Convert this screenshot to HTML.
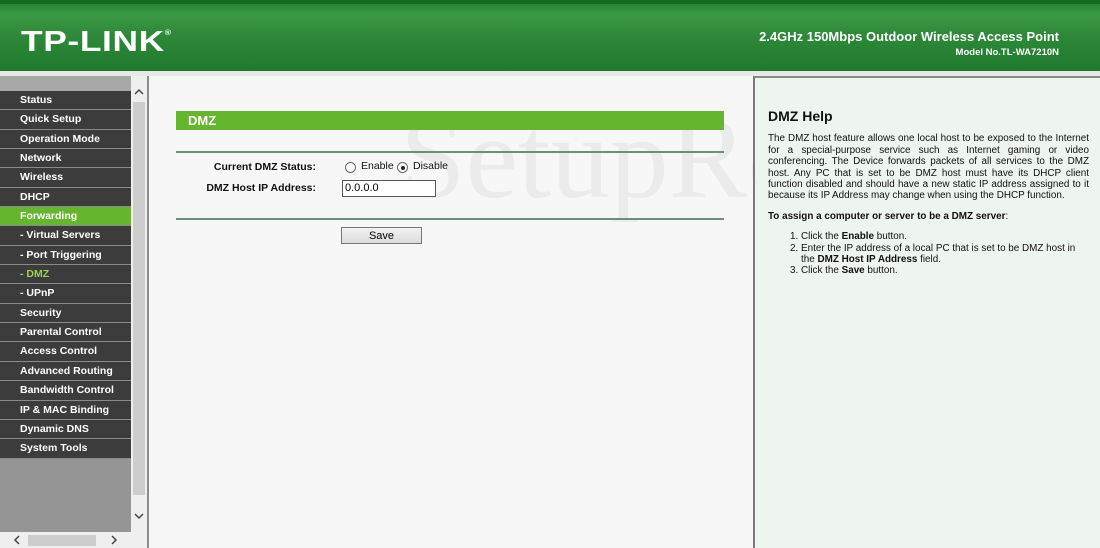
<!DOCTYPE html>
<html><head><style>
*{margin:0;padding:0;box-sizing:border-box}
body{width:1100px;height:548px;overflow:hidden;background:#f7f7f7;font-family:"Liberation Sans",Arial,sans-serif;position:relative}
.hdr{position:absolute;left:0;top:0;width:1100px;height:71px;background:linear-gradient(180deg,#1d7a2c 0%,#3c9a44 20%,#2f8a3a 45%,#1f7a2e 100%)}
.hdr .top{position:absolute;left:0;top:0;width:1100px;height:4px;background:#156a22}
.logo{position:absolute;left:21px;top:26px;color:#fff;font-weight:bold;font-size:29px;letter-spacing:0.5px;transform:scaleX(1.22);transform-origin:left;white-space:nowrap}
.logo sup{font-size:7px;vertical-align:top;position:relative;top:4px}
.t1{position:absolute;right:41px;top:29px;color:#fff;font-weight:bold;font-size:13px}
.t2{position:absolute;right:41px;top:47px;color:#fff;font-weight:bold;font-size:9.5px}
.sep{position:absolute;left:0;top:71px;width:1100px;height:5px;background:#e6e9e6}
.side{position:absolute;left:0;top:76px;width:131px;height:472px;background:#959595}
.side .band{height:15px;background:#a8a8a8}
.mi{height:19.35px;background:#3c3c3c;border-bottom:1.5px solid #8a8a8a;color:#fff;font-weight:bold;font-size:10.5px;line-height:19px;padding-left:20px}
.mi.act{background:#66b52e}
.mi.sel{color:#9fd24a}
.sb{position:absolute;left:131px;top:76px;width:16px;height:456px;background:#efefef}
.sb .th{position:absolute;left:2px;top:26px;width:12px;height:393px;background:#cdcdcd}
.hb{position:absolute;left:0;top:532px;width:147px;height:16px;background:#efefef}
.hb .th{position:absolute;left:28px;top:3px;width:68px;height:11px;background:#cdcdcd}
.div{position:absolute;left:147px;top:76px;width:2px;height:472px;background:#8c8c8c}
.main{position:absolute;left:149px;top:76px;width:603px;height:472px;background:#f7f7f7}
.wm{position:absolute;left:400px;top:90px;font-family:"Liberation Serif",serif;font-size:118px;color:#ebebeb;white-space:nowrap}
.bar{position:absolute;left:176px;top:111px;width:548px;height:19px;background:#66b52e;color:#fff;font-weight:bold;font-size:13px;line-height:19px;padding-left:12px}
.hl{position:absolute;left:176px;width:548px;height:2px;background:#6b9078}
.lbl{position:absolute;font-weight:bold;font-size:10.5px;color:#111;text-align:right;width:200px;left:116px}
.rad{position:absolute;width:11px;height:11px;border:1px solid #666;border-radius:50%;background:#fff}
.rad.on::after{content:"";position:absolute;left:2.5px;top:2.5px;width:4px;height:4px;background:#222;border-radius:50%}
.txt{position:absolute;font-size:10.5px;color:#111}
.inp{position:absolute;left:342px;top:180px;width:94px;height:17px;border:1px solid #555;background:#fff;font-size:11px;padding-left:2px;line-height:15px}
.btn{position:absolute;left:341px;top:227px;width:81px;height:17px;border:1px solid #777;background:linear-gradient(#f2f2f2,#dcdcdc);font-size:11px;text-align:center;line-height:16px}
.help{position:absolute;left:753px;top:76px;width:347px;height:472px;background:#eef4ee;border-left:2px solid #7a7a7a;border-top:2px solid #8a8a8a;padding:33px 11px 0 13px;color:#111;font-size:9.9px;line-height:11.4px}
.help h3{font-size:14px;margin-bottom:11px}
.help p{text-align:justify}
.help ol{margin:9px 0 0 33px}
</style></head><body>
<div class="hdr"><div class="top"></div>
<div class="logo">TP-LINK<sup>®</sup></div>
<div class="t1">2.4GHz 150Mbps Outdoor Wireless Access Point</div>
<div class="t2">Model No.TL-WA7210N</div></div>
<div class="sep"></div>
<div class="side"><div class="band"></div>
<div class="mi">Status</div><div class="mi">Quick Setup</div><div class="mi">Operation Mode</div><div class="mi">Network</div><div class="mi">Wireless</div><div class="mi">DHCP</div><div class="mi act">Forwarding</div><div class="mi">- Virtual Servers</div><div class="mi">- Port Triggering</div><div class="mi sel">- DMZ</div><div class="mi">- UPnP</div><div class="mi">Security</div><div class="mi">Parental Control</div><div class="mi">Access Control</div><div class="mi">Advanced Routing</div><div class="mi">Bandwidth Control</div><div class="mi">IP &amp; MAC Binding</div><div class="mi">Dynamic DNS</div><div class="mi">System Tools</div>
</div>
<div class="sb"><div class="th"></div>
<svg style="position:absolute;left:3px;top:12px" width="10" height="7"><path d="M1 6 L5 2 L9 6" fill="none" stroke="#444" stroke-width="1.5"/></svg>
<svg style="position:absolute;left:3px;top:437px" width="10" height="7"><path d="M1 1 L5 5 L9 1" fill="none" stroke="#444" stroke-width="1.5"/></svg></div>
<div class="hb"><div class="th"></div>
<svg style="position:absolute;left:13px;top:3px" width="7" height="10"><path d="M6 1 L2 5 L6 9" fill="none" stroke="#444" stroke-width="1.5"/></svg>
<svg style="position:absolute;left:111px;top:3px" width="7" height="10"><path d="M1 1 L5 5 L1 9" fill="none" stroke="#444" stroke-width="1.5"/></svg></div>
<div class="div"></div>
<div class="main"></div>
<div class="wm">SetupRouter</div>
<div class="bar">DMZ</div>
<div class="hl" style="top:151px"></div>
<div class="lbl" style="top:161px">Current DMZ Status:</div>
<div class="rad" style="left:345px;top:162px"></div><div class="txt" style="left:361px;top:160px">Enable</div>
<div class="rad on" style="left:397px;top:162px"></div><div class="txt" style="left:413px;top:160px">Disable</div>
<div class="lbl" style="top:182px">DMZ Host IP Address:</div>
<div class="inp">0.0.0.0</div>
<div class="hl" style="top:218px"></div>
<div class="btn">Save</div>
<div class="help"><h3>DMZ Help</h3>
<p>The DMZ host feature allows one local host to be exposed to the Internet for a special-purpose service such as Internet gaming or video conferencing. The Device forwards packets of all services to the DMZ host. Any PC that is set to be DMZ host must have its DHCP client function disabled and should have a new static IP address assigned to it because its IP Address may change when using the DHCP function.</p>
<p style="margin-top:9px"><b>To assign a computer or server to be a DMZ server</b>:</p>
<ol><li>Click the <b>Enable</b> button.</li><li>Enter the IP address of a local PC that is set to be DMZ host in the <b>DMZ Host IP Address</b> field.</li><li>Click the <b>Save</b> button.</li></ol>
</div>
</body></html>
